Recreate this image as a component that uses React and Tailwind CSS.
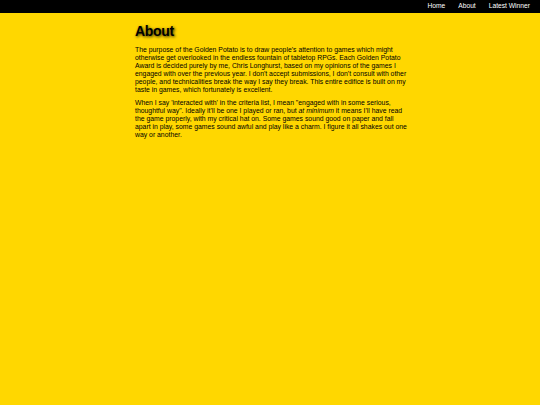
import React from 'react';

const App = () => {
   return (
      <div
         className="min-h-screen w-full bg-[#ffd700] text-black"
         style={{fontFamily: '"Liberation Sans", Arial, sans-serif'}}>
         {/* Nav */}
         <nav className="w-full h-[13px] bg-black flex justify-end items-center pr-[10px] gap-[13px] text-[6.7px]">
            <a href="#" className="text-white">Home</a>
            <a href="#" className="text-white">About</a>
            <a href="#" className="text-white">Latest Winner</a>
         </nav>

         <main className="w-[272px] ml-[135px] pt-[9px]">
            <h1 className="text-[14px] font-bold leading-[18px] tracking-[-0.3px] [text-shadow:1px_1px_3px_rgba(0,0,0,0.8)] mb-[6px]">
               About
            </h1>
            <p className="text-[6.85px] leading-[8px] mb-[5px]">
               The purpose of the Golden Potato is to draw people's attention
               to games which might otherwise get overlooked in the endless
               fountain of tabletop RPGs. Each Golden Potato Award is decided
               purely by me, Chris Longhurst, based on my opinions of the games
               I engaged with over the previous year. I don't accept
               submissions, I don't consult with other people, and
               technicalities break the way I say they break. This entire
               edifice is built on my taste in games, which fortunately is
               excellent.
            </p>
            <p className="text-[6.85px] leading-[8px]">
               When I say 'interacted with' in the criteria list, I mean
               "engaged with in some serious, thoughtful way". Ideally it'll be
               one I played or ran, but <em>at minimum</em> it means I'll have
               read the game properly, with my critical hat on. Some games
               sound good on paper and fall apart in play, some games sound
               awful and play like a charm. I figure it all shakes out one way
               or another.
            </p>
         </main>
      </div>
   );
};

export default App;
